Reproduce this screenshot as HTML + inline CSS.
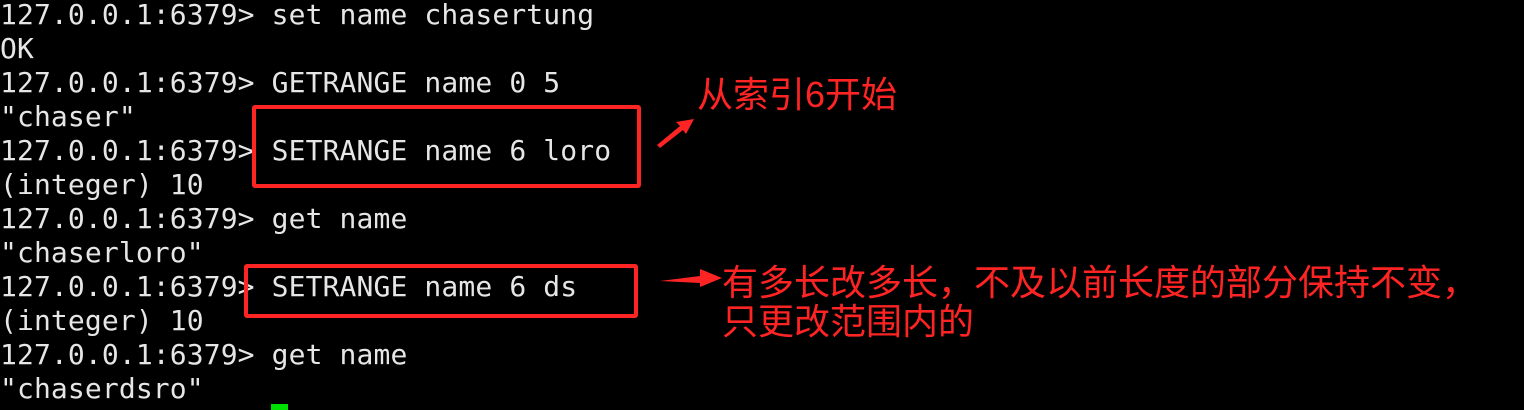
<!DOCTYPE html>
<html><head><meta charset="utf-8"><style>
html,body{margin:0;padding:0;background:#000;width:1524px;height:410px;overflow:hidden}
pre{position:absolute;left:0;top:-2px;margin:0;font-family:"DejaVu Sans Mono","Liberation Mono",monospace;font-size:28px;line-height:34px;color:#e6e6e6;letter-spacing:0.12px}
.box{position:absolute;border:4px solid #ff2424;border-radius:3px}
.t{position:absolute;color:#ff2424;font-family:"Liberation Sans","Noto Sans CJK SC",sans-serif;font-size:36px;line-height:39px;white-space:nowrap}
</style></head><body>
<pre>127.0.0.1:6379&gt; set name chasertung
OK
127.0.0.1:6379&gt; GETRANGE name 0 5
"chaser"
127.0.0.1:6379&gt; SETRANGE name 6 loro
(integer) 10
127.0.0.1:6379&gt; get name
"chaserloro"
127.0.0.1:6379&gt; SETRANGE name 6 ds
(integer) 10
127.0.0.1:6379&gt; get name
"chaserdsro"</pre>
<div class="box" style="left:252px;top:105px;width:381px;height:75px"></div>
<div class="box" style="left:244px;top:264px;width:386px;height:46px"></div>
<div class="t" style="left:697px;top:75px">从索引6开始</div>
<div class="t" style="left:722px;top:263px">有多长改多长，不及以前长度的部分保持不变，<br>只更改范围内的</div>
<svg style="position:absolute;left:0;top:0" width="1524" height="410">
<polygon points="657,145 680,126 676,122 694,119 686,134 683,130 660,148" fill="#ff2424"/>
<polygon points="660,281 700,276 700,269 722,278 700,287 700,283" fill="#ff2424"/>
</svg>
<div style="position:absolute;left:271px;top:404px;width:17px;height:6px;background:#00e000"></div>
</body></html>
